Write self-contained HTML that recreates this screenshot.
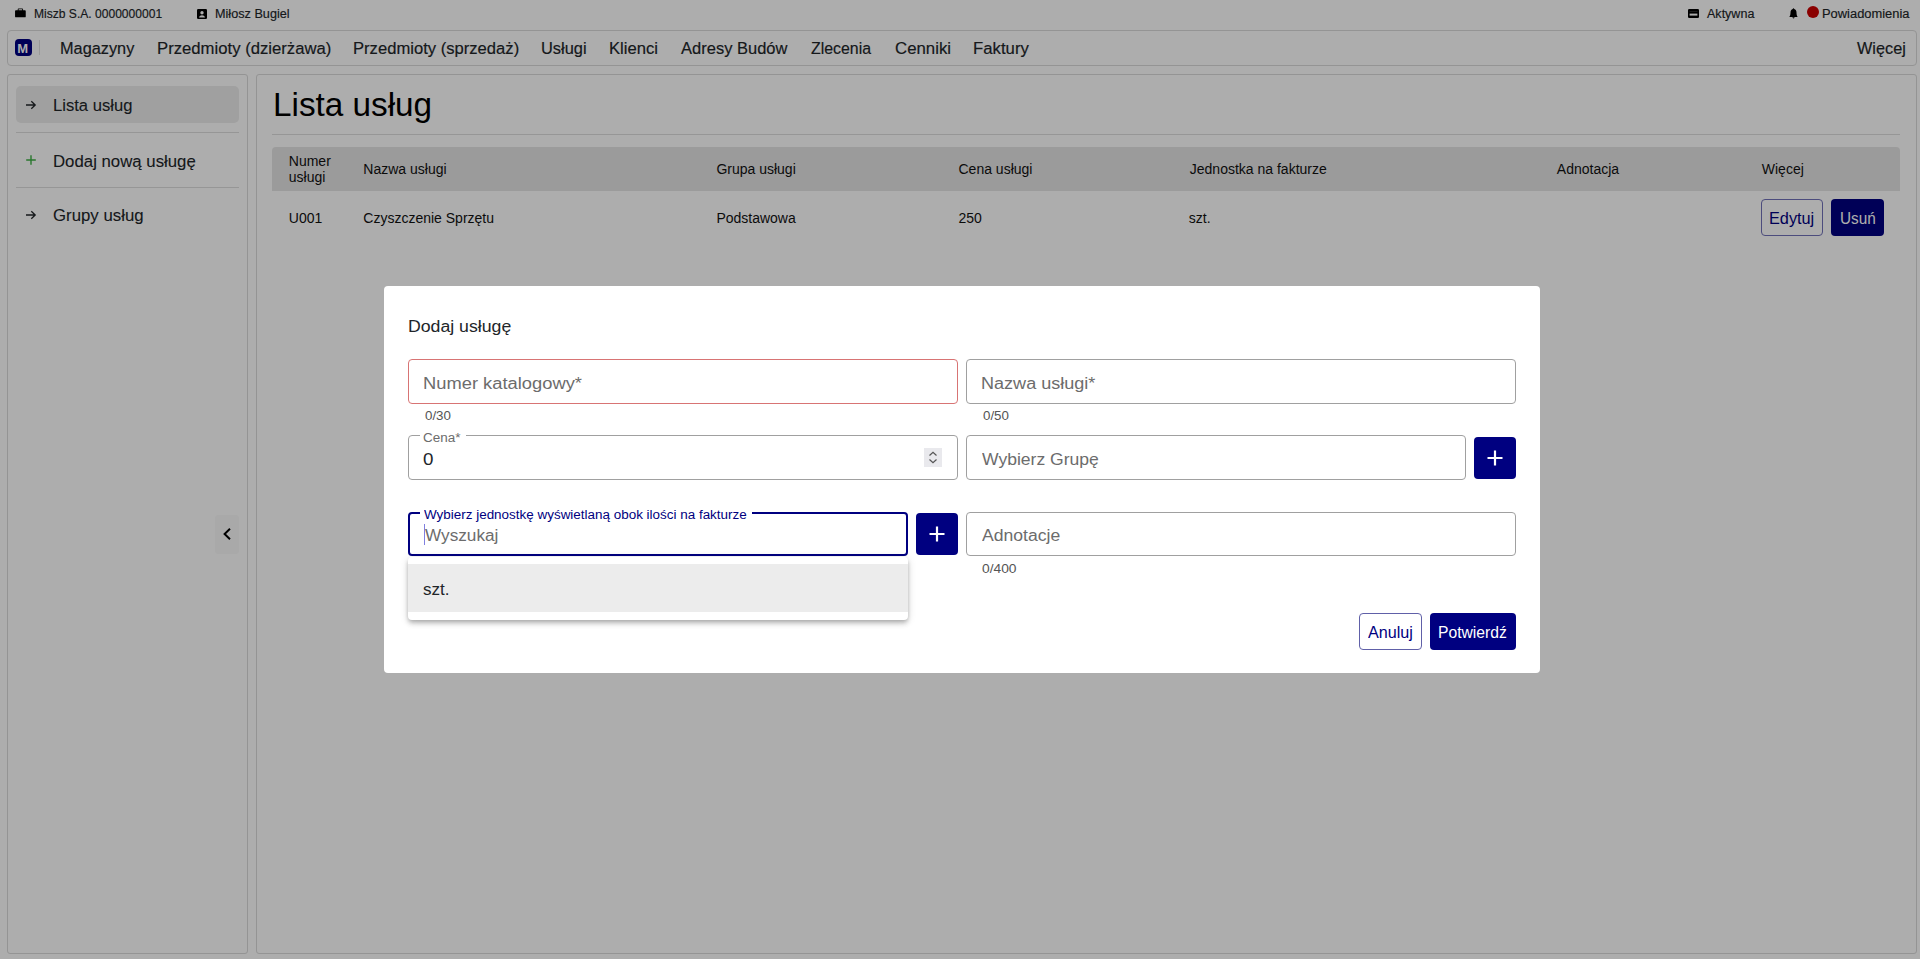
<!DOCTYPE html>
<html><head><meta charset="utf-8">
<style>
html,body{margin:0;padding:0;width:1920px;height:959px;overflow:hidden;background:#fff;font-family:"Liberation Sans",sans-serif;}
.t{position:absolute;white-space:nowrap;line-height:1;font-family:"Liberation Sans",sans-serif;}
.b{position:absolute;box-sizing:border-box;}
#page{position:absolute;left:0;top:0;width:1920px;height:959px;background:#fff;}
#overlay{position:absolute;left:0;top:0;width:1920px;height:959px;background:rgba(0,0,0,0.32);}
#modal{position:absolute;left:384px;top:286px;width:1156px;height:387px;background:#fff;border-radius:4px;}
#mlayer{position:absolute;left:0;top:0;width:1920px;height:959px;}
</style></head><body>
<div id="page">
  <!-- top bar icons -->
  <svg class="b" style="left:15.4px;top:8.3px" width="10.8" height="9.8" viewBox="0 0 12 11"><path d="M4 0.5h4a1 1 0 0 1 1 1V2.5h2a1 1 0 0 1 1 1V9.5a1 1 0 0 1-1 1H1a1 1 0 0 1-1-1V3.5a1 1 0 0 1 1-1h2V1.5a1 1 0 0 1 1-1zM4 1.5V2.5h4V1.5z" fill="#000"/></svg>
  <svg class="b" style="left:197px;top:9px" width="10" height="10" viewBox="0 0 10 10"><rect x="0" y="0" width="10" height="10" rx="1.2" fill="#000"/><circle cx="5" cy="3.8" r="1.7" fill="#fff"/><path d="M2 8.6c0.4-1.6 1.6-2.4 3-2.4s2.6 0.8 3 2.4z" fill="#fff"/></svg>
  <svg class="b" style="left:1688px;top:9px" width="11" height="9" viewBox="0 0 11 9"><rect x="0" y="0" width="11" height="9" rx="1.3" fill="#000"/><rect x="1.6" y="4.6" width="7.8" height="2" fill="#fff"/><rect x="1.6" y="2" width="7.8" height="0.6" fill="#444"/></svg>
  <svg class="b" style="left:1789px;top:8px" width="9" height="11" viewBox="0 0 9 11"><path d="M4.5 0.3c0.4 0 0.7 0.3 0.7 0.7C6.7 1.4 7.5 2.7 7.5 4.4c0 2.3 0.5 3.5 1.2 4.5H0.3C1 7.9 1.5 6.7 1.5 4.4 1.5 2.7 2.3 1.4 3.8 1c0-0.4 0.3-0.7 0.7-0.7z M3.4 9.3h2.2a1.1 1.1 0 0 1-2.2 0z" fill="#000"/></svg>
  <div class="b" style="left:1807px;top:6px;width:12px;height:12px;border-radius:50%;background:#cc0000"></div>

  <!-- navbar -->
  <div class="b" style="left:7px;top:29.5px;width:1910px;height:36.5px;border:1px solid #dadada;border-radius:4px"></div>
  <div class="b" style="left:15px;top:39px;width:17px;height:17px;border-radius:4px;background:#000080"></div>
  <span class="t" style="left:17.2px;top:41.6px;font-size:13px;font-weight:700;color:#fff;letter-spacing:-0.2px">M</span>
  <div class="b" style="left:39px;top:40px;width:1px;height:15px;background:#e2e2e2"></div>

  <!-- sidebar panel -->
  <div class="b" style="left:7px;top:73.5px;width:241px;height:880.5px;border:1px solid #dadada;border-radius:3px"></div>
  <div class="b" style="left:16px;top:86px;width:223px;height:37px;border-radius:5px;background:#ececec"></div>
  <div class="b" style="left:16px;top:132px;width:223px;height:1px;background:#dedede"></div>
  <div class="b" style="left:16px;top:187px;width:223px;height:1px;background:#dedede"></div>
  <svg class="b" style="left:25px;top:99px" width="12" height="12" viewBox="0 0 12 12"><path d="M1 6h9.2M6.3 2.2L10.2 6 6.3 9.8" stroke="#212529" stroke-width="1.3" fill="none"/></svg>
  <svg class="b" style="left:25px;top:154px" width="12" height="12" viewBox="0 0 12 12"><path d="M6 1.2v9.6M1.2 6h9.6" stroke="#3cb043" stroke-width="1.4" fill="none"/></svg>
  <svg class="b" style="left:25px;top:209px" width="12" height="12" viewBox="0 0 12 12"><path d="M1 6h9.2M6.3 2.2L10.2 6 6.3 9.8" stroke="#212529" stroke-width="1.3" fill="none"/></svg>
  <div class="b" style="left:215px;top:515px;width:24px;height:39px;border-radius:3px;background:#fafafa"></div>
  <svg class="b" style="left:221px;top:527px" width="12" height="14" viewBox="0 0 12 14"><path d="M9 1.8L3.6 7 9 12.2" stroke="#000" stroke-width="2" fill="none"/></svg>

  <!-- main panel -->
  <div class="b" style="left:256px;top:73.5px;width:1661px;height:880.5px;border:1px solid #dadada;border-radius:3px"></div>
  <div class="b" style="left:272px;top:134px;width:1628px;height:1px;background:#dedede"></div>
  <div class="b" style="left:272px;top:147px;width:1628px;height:44px;background:#e5e5e5;border-radius:4px 4px 0 0"></div>
  <div class="b" style="left:1761px;top:199px;width:62px;height:37px;border:1px solid #7070b8;border-radius:4px"></div>
  <div class="b" style="left:1831px;top:199px;width:53px;height:37px;background:#000080;border-radius:4px"></div>

  <span class="t" style="left:34.49px;top:7.90px;font-size:12px;color:#212529;transform:scale(1.0056,1.000);transform-origin:0 0;-webkit-text-stroke:0.15px #212529;">Miszb S.A. 0000000001</span>
<span class="t" style="left:214.64px;top:7.90px;font-size:12px;color:#212529;transform:scale(1.0551,1.000);transform-origin:0 0;-webkit-text-stroke:0.15px #212529;">Miłosz Bugiel</span>
<span class="t" style="left:1707.40px;top:7.80px;font-size:12px;color:#212529;transform:scale(1.0444,1.000);transform-origin:0 0;-webkit-text-stroke:0.15px #212529;">Aktywna</span>
<span class="t" style="left:1821.92px;top:7.80px;font-size:12px;color:#212529;transform:scale(1.0750,1.000);transform-origin:0 0;-webkit-text-stroke:0.15px #212529;">Powiadomienia</span>
<span class="t" style="left:60.11px;top:40.05px;font-size:15px;color:#212529;transform:scale(1.0866,1.050);transform-origin:0 0;-webkit-text-stroke:0.15px #212529;">Magazyny</span>
<span class="t" style="left:156.69px;top:40.05px;font-size:15px;color:#212529;transform:scale(1.1129,1.050);transform-origin:0 0;-webkit-text-stroke:0.15px #212529;">Przedmioty (dzierżawa)</span>
<span class="t" style="left:352.99px;top:40.05px;font-size:15px;color:#212529;transform:scale(1.1074,1.050);transform-origin:0 0;-webkit-text-stroke:0.15px #212529;">Przedmioty (sprzedaż)</span>
<span class="t" style="left:541.10px;top:40.05px;font-size:15px;color:#212529;transform:scale(1.0950,1.050);transform-origin:0 0;-webkit-text-stroke:0.15px #212529;">Usługi</span>
<span class="t" style="left:609.19px;top:40.05px;font-size:15px;color:#212529;transform:scale(1.1095,1.050);transform-origin:0 0;-webkit-text-stroke:0.15px #212529;">Klienci</span>
<span class="t" style="left:681.10px;top:40.05px;font-size:15px;color:#212529;transform:scale(1.1010,1.050);transform-origin:0 0;-webkit-text-stroke:0.15px #212529;">Adresy Budów</span>
<span class="t" style="left:811.30px;top:40.05px;font-size:15px;color:#212529;transform:scale(1.0596,1.050);transform-origin:0 0;-webkit-text-stroke:0.15px #212529;">Zlecenia</span>
<span class="t" style="left:894.88px;top:40.05px;font-size:15px;color:#212529;transform:scale(1.1208,1.050);transform-origin:0 0;-webkit-text-stroke:0.15px #212529;">Cenniki</span>
<span class="t" style="left:972.98px;top:40.05px;font-size:15px;color:#212529;transform:scale(1.1163,1.050);transform-origin:0 0;-webkit-text-stroke:0.15px #212529;">Faktury</span>
<span class="t" style="left:1857.10px;top:40.05px;font-size:15px;color:#212529;transform:scale(1.0841,1.050);transform-origin:0 0;-webkit-text-stroke:0.15px #212529;">Więcej</span>
<span class="t" style="left:53.09px;top:96.95px;font-size:15px;color:#212529;transform:scale(1.1071,1.050);transform-origin:0 0;-webkit-text-stroke:0.08px #212529;">Lista usług</span>
<span class="t" style="left:53.08px;top:152.55px;font-size:15px;color:#212529;transform:scale(1.1190,1.050);transform-origin:0 0;-webkit-text-stroke:0.08px #212529;">Dodaj nową usługę</span>
<span class="t" style="left:53.08px;top:207.15px;font-size:15px;color:#212529;transform:scale(1.1203,1.050);transform-origin:0 0;-webkit-text-stroke:0.08px #212529;">Grupy usług</span>
<span class="t" style="left:272.77px;top:88.20px;font-size:33px;color:#000;transform:scale(1.0085,1.000);transform-origin:0 0;">Lista usług</span>
<span class="t" style="left:288.80px;top:154.00px;font-size:14px;color:#111;">Numer</span>
<span class="t" style="left:288.80px;top:170.00px;font-size:14px;color:#111;">usługi</span>
<span class="t" style="left:363.30px;top:161.80px;font-size:14px;color:#111;">Nazwa usługi</span>
<span class="t" style="left:716.40px;top:162.20px;font-size:14px;color:#111;">Grupa usługi</span>
<span class="t" style="left:958.50px;top:162.20px;font-size:14px;color:#111;">Cena usługi</span>
<span class="t" style="left:1189.80px;top:162.20px;font-size:14px;color:#111;">Jednostka na fakturze</span>
<span class="t" style="left:1556.80px;top:162.20px;font-size:14px;color:#111;">Adnotacja</span>
<span class="t" style="left:1761.80px;top:162.20px;font-size:14px;color:#111;">Więcej</span>
<span class="t" style="left:288.80px;top:211.00px;font-size:14px;color:#111;">U001</span>
<span class="t" style="left:363.30px;top:211.00px;font-size:14px;color:#111;">Czyszczenie Sprzętu</span>
<span class="t" style="left:716.40px;top:211.00px;font-size:14px;color:#111;">Podstawowa</span>
<span class="t" style="left:958.50px;top:211.00px;font-size:14px;color:#111;">250</span>
<span class="t" style="left:1188.80px;top:211.00px;font-size:14px;color:#111;">szt.</span>
<span class="t" style="left:1768.98px;top:210.80px;font-size:16px;color:#000080;transform:scale(1.0163,1.000);transform-origin:0 0;">Edytuj</span>
<span class="t" style="left:1839.54px;top:210.80px;font-size:16px;color:#fff;transform:scale(0.9583,1.000);transform-origin:0 0;">Usuń</span>
</div>
<div id="overlay"></div>
<div id="mlayer">
  <div id="modal"></div>
  <!-- inputs -->
  <div class="b" style="left:408px;top:359px;width:550px;height:45px;border:1px solid #d87474;border-radius:4px"></div>
  <div class="b" style="left:966px;top:359px;width:550px;height:45px;border:1px solid #a0a0a0;border-radius:4px"></div>
  <div class="b" style="left:408px;top:435px;width:550px;height:45px;border:1px solid #a0a0a0;border-radius:4px"></div>
  <div class="b" style="left:420px;top:433px;width:46px;height:5px;background:#fff"></div>
  <div class="b" style="left:924px;top:448px;width:18px;height:19px;background:#e9e9ed"></div>
  <svg class="b" style="left:924px;top:448px" width="18" height="19" viewBox="0 0 18 19"><path d="M5.5 7.5L9 4.2l3.5 3.3M5.5 11.5L9 14.8l3.5-3.3" stroke="#555" stroke-width="1.2" fill="none"/></svg>
  <div class="b" style="left:966px;top:435px;width:500px;height:45px;border:1px solid #a0a0a0;border-radius:4px"></div>
  <div class="b" style="left:1474px;top:437px;width:42px;height:42px;background:#000080;border-radius:4px"></div>
  <svg class="b" style="left:1474px;top:437px" width="42" height="42" viewBox="0 0 42 42"><path d="M21 13.5v15M13.5 21h15" stroke="#fff" stroke-width="2.2" fill="none"/></svg>
  <div class="b" style="left:408px;top:512px;width:500px;height:44px;border:2px solid #000080;border-radius:4px"></div>
  <div class="b" style="left:420px;top:509px;width:332px;height:6px;background:#fff"></div>
  <div class="b" style="left:916px;top:513px;width:42px;height:42px;background:#000080;border-radius:4px"></div>
  <svg class="b" style="left:916px;top:513px" width="42" height="42" viewBox="0 0 42 42"><path d="M21 13.5v15M13.5 21h15" stroke="#fff" stroke-width="2.2" fill="none"/></svg>
  <div class="b" style="left:966px;top:512px;width:550px;height:44px;border:1px solid #a0a0a0;border-radius:4px"></div>
  <div class="b" style="left:424px;top:523.5px;width:1px;height:21.5px;background:#8080e0"></div>
  <!-- dropdown -->
  <div class="b" style="left:408px;top:557px;width:500px;height:63px;background:#fff;border-radius:4px;box-shadow:0 2px 4px -1px rgba(0,0,0,.2),0 4px 5px 0 rgba(0,0,0,.14),0 1px 10px 0 rgba(0,0,0,.12)"></div>
  <div class="b" style="left:408px;top:564px;width:500px;height:48px;background:#ececec"></div>
  <!-- buttons -->
  <div class="b" style="left:1359px;top:613px;width:63px;height:37px;border:1px solid #6060a8;border-radius:4px"></div>
  <div class="b" style="left:1430px;top:613px;width:86px;height:37px;background:#000080;border-radius:4px"></div>
  <span class="t" style="left:407.89px;top:319.40px;font-size:16px;color:#212529;transform:scale(1.1054,1.000);transform-origin:0 0;">Dodaj usługę</span>
<span class="t" style="left:423.25px;top:375.80px;font-size:16px;color:#6c6c6c;transform:scale(1.1457,1.000);transform-origin:0 0;">Numer katalogowy*</span>
<span class="t" style="left:424.60px;top:410.10px;font-size:12.5px;color:#555;transform:scale(1.0667,1.000);transform-origin:0 0;">0/30</span>
<span class="t" style="left:981.37px;top:375.90px;font-size:16px;color:#6c6c6c;transform:scale(1.1280,1.000);transform-origin:0 0;">Nazwa usługi*</span>
<span class="t" style="left:982.50px;top:410.10px;font-size:12.5px;color:#555;transform:scale(1.0667,1.000);transform-origin:0 0;">0/50</span>
<span class="t" style="left:423.48px;top:432.40px;font-size:12px;color:#6c6c6c;transform:scale(1.1219,1.000);transform-origin:0 0;">Cena*</span>
<span class="t" style="left:423.43px;top:451.60px;font-size:16px;color:#212529;transform:scale(1.1714,1.000);transform-origin:0 0;">0</span>
<span class="t" style="left:982.20px;top:452.20px;font-size:16px;color:#6c6c6c;transform:scale(1.0962,1.000);transform-origin:0 0;">Wybierz Grupę</span>
<span class="t" style="left:424.20px;top:508.90px;font-size:12px;color:#000080;transform:scale(1.1205,1.000);transform-origin:0 0;">Wybierz jednostkę wyświetlaną obok ilości na fakturze</span>
<span class="t" style="left:424.60px;top:528.20px;font-size:16px;color:#6c6c6c;transform:scale(1.0746,1.000);transform-origin:0 0;">Wyszukaj</span>
<span class="t" style="left:982.30px;top:528.20px;font-size:16px;color:#6c6c6c;transform:scale(1.0986,1.000);transform-origin:0 0;">Adnotacje</span>
<span class="t" style="left:982.00px;top:562.50px;font-size:12.5px;color:#555;transform:scale(1.1032,1.000);transform-origin:0 0;">0/400</span>
<span class="t" style="left:423.13px;top:582.10px;font-size:16px;color:#212529;transform:scale(1.0652,1.000);transform-origin:0 0;">szt.</span>
<span class="t" style="left:1368.40px;top:624.80px;font-size:16px;color:#000080;transform:scale(1.0091,1.000);transform-origin:0 0;">Anuluj</span>
<span class="t" style="left:1438.12px;top:624.80px;font-size:16px;color:#fff;transform:scale(0.9797,1.000);transform-origin:0 0;">Potwierdź</span>
</div>
</body></html>
